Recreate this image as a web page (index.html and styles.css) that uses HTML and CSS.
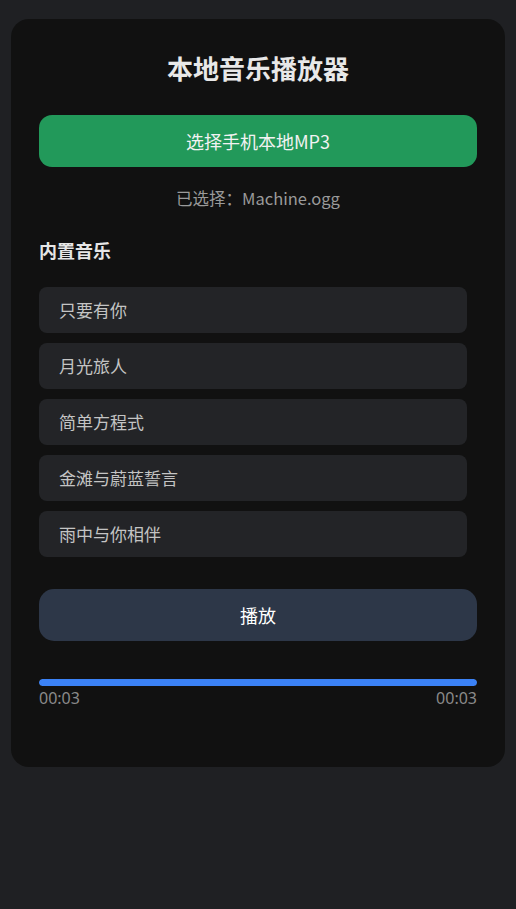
FILE: index.html
```html
<!DOCTYPE html>
<html lang="zh-CN">
<head>
<meta charset="utf-8">
<title>本地音乐播放器</title>
<link rel="stylesheet" href="styles.css">
</head>
<body>
<div class="card">
  <h1 class="title">本地音乐播放器</h1>
  <button class="btn btn-pick">选择手机本地MP3</button>
  <div class="selected">已选择：Machine.ogg</div>
  <div class="section-title">内置音乐</div>
  <ul class="list">
    <li class="item">只要有你</li>
    <li class="item">月光旅人</li>
    <li class="item">简单方程式</li>
    <li class="item">金滩与蔚蓝誓言</li>
    <li class="item">雨中与你相伴</li>
  </ul>
  <button class="btn btn-play">播放</button>
  <div class="progress"><div class="progress-fill" style="width:100%"></div></div>
  <div class="times"><span>00:03</span><span>00:03</span></div>
</div>
</body>
</html>
```
FILE: styles.css
```css
html, body {
  margin: 0;
  padding: 0;
}
body {
  background: #1f2023;
  font-family: "Noto Sans CJK SC", "Noto Sans", sans-serif;
  padding: 19px 11px;
  min-height: 909px;
  box-sizing: border-box;
}
.card {
  background: #111111;
  border-radius: 18px;
  padding: 28px 28px 57px;
}
.title {
  margin: 0;
  font-size: 26px;
  line-height: 42px;
  font-weight: 700;
  text-align: center;
  color: #e8e8e8;
}
.btn {
  display: block;
  width: 100%;
  height: 52px;
  border: none;
  font-family: inherit;
  font-size: 18px;
  color: #ffffff;
  padding: 0;
}
.btn-pick {
  margin-top: 26px;
  background: #22995a;
  border-radius: 13px;
  color: #f2f2f2;
}
.selected {
  margin-top: 19px;
  font-size: 16.5px;
  line-height: 24px;
  color: #9a9a9a;
  text-align: center;
}
.section-title {
  margin-top: 27px;
  font-size: 18px;
  line-height: 26px;
  font-weight: 700;
  color: #e6e6e6;
}
.list {
  list-style: none;
  margin: 24px 10px 0 0;
  padding: 0;
  display: flex;
  flex-direction: column;
  gap: 10px;
}
.item {
  height: 46px;
  line-height: 45px;
  background: #232427;
  border-radius: 8px;
  padding: 0 20px;
  font-size: 17px;
  color: #c4c4c4;
}
.btn-play {
  margin-top: 32px;
  background: #2d3748;
  border-radius: 15px;
}
.progress {
  margin-top: 38px;
  height: 7px;
  border-radius: 4px;
  background: #2a2a2a;
  overflow: hidden;
}
.progress-fill {
  height: 100%;
  background: #3b82f6;
  border-radius: 4px;
}
.times {
  display: flex;
  justify-content: space-between;
  font-family: "Noto Sans", sans-serif;
  font-size: 16px;
  line-height: 24px;
  color: #8a8a8a;
}
```
